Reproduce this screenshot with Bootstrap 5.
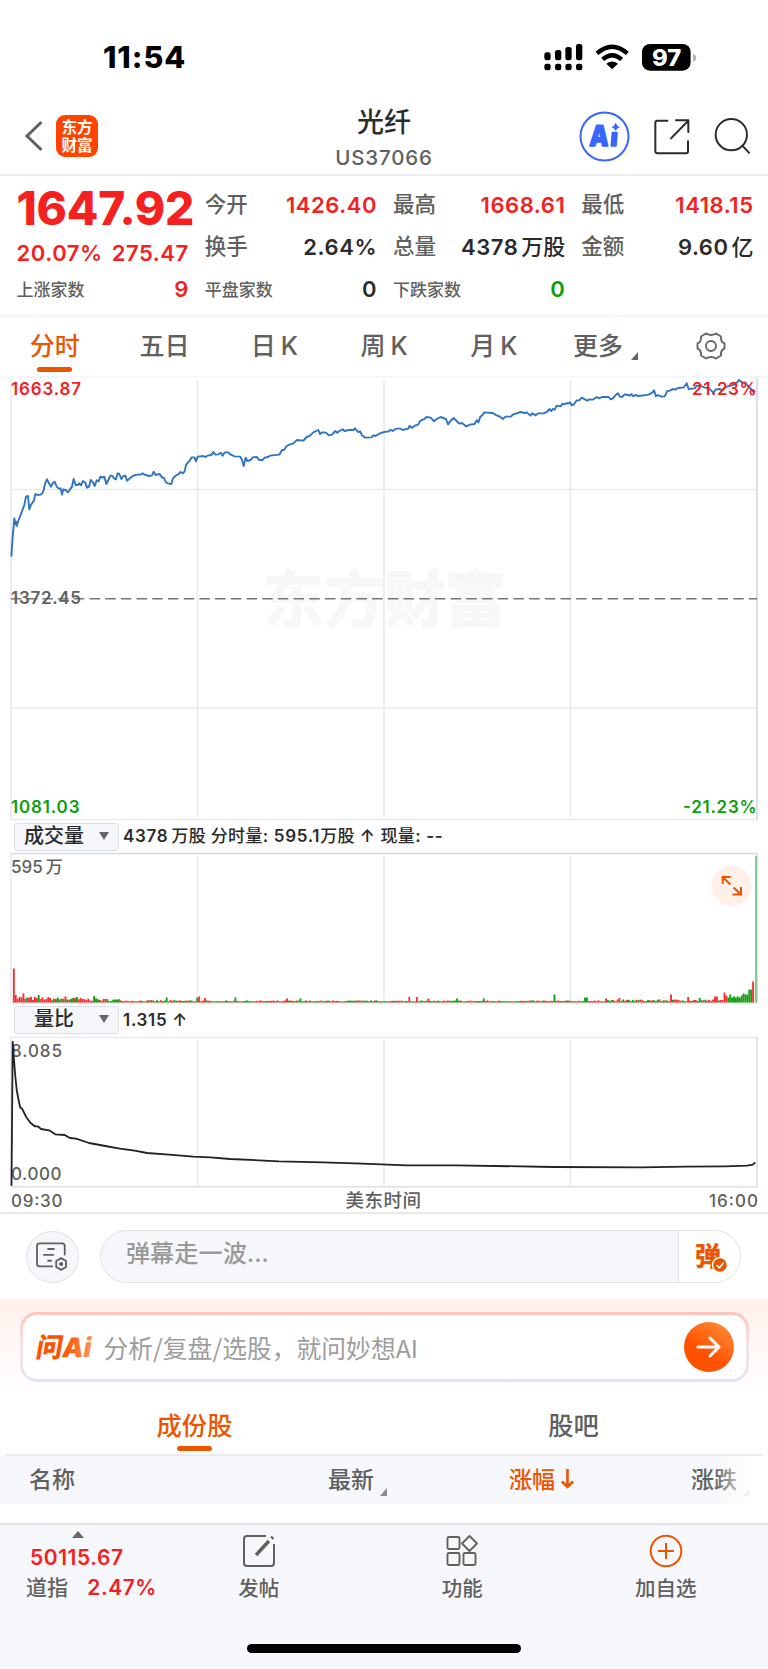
<!DOCTYPE html>
<html lang="zh-CN">
<head>
<meta charset="utf-8">
<meta name="viewport" content="width=device-width, initial-scale=1">
<title>光纤 US37066</title>
<link href="https://cdn.jsdelivr.net/npm/bootstrap@5.3.0/dist/css/bootstrap.min.css" rel="stylesheet">
<style>
  :root { --up:#f52020; --down:#0a9f0a; --brand:#eb5500; --ink:#2b2b2b; --dim:#606060; --pane:#f6f7fa; --rule:#e4e6eb; }
  body { font-family: Inter, "Noto Sans CJK SC", sans-serif; font-weight:500; color:var(--ink); background:#fff; line-height:1; overflow-x:hidden; }
  .phone { width:768px; height:1669px; overflow:hidden; }
  .up { color:var(--up); } .down { color:var(--down); } .dim { color:var(--dim); } .brand { color:var(--brand); }
  svg { flex:none; overflow:visible; }
  .statusbar { height:98px; padding:16px 71px 0 103px; }
  .clock { font-size:30.5px; font-weight:800; letter-spacing:.9px; color:#000; }
  .topbar { height:78px; border-bottom:2px solid #ededed; padding:0 17px 0 25px; }
  .topbar .side { width:172px; }
  .topbar .side-r { width:180px; padding-left:8px; }
  .applogo { width:42px; height:42px; border-radius:9px; background:#ff4400; color:#fff; font-weight:700; font-size:15.6px; line-height:18px; margin-left:13px; padding-top:1px; }
  .stock-name { font-size:27px; line-height:30px; margin-top:5px; }
  .stock-code { font-size:20.5px; line-height:22px; letter-spacing:.85px; margin-top:9px; font-weight:500; }
  .quote { height:141px; border-bottom:2px solid #f5f5f5; padding:8px 15px 0 16.5px; }
  .quote .row { --bs-gutter-x:16.5px; }
  .q { height:42px; font-size:21.5px; }
  .q .num { letter-spacing:.55px; font-size:22px; font-weight:600; margin-right:-.55px; }
  .q .num span { margin-left:3px; font-weight:500; letter-spacing:0; }
  .price { height:48px; font-size:46px; font-weight:800; letter-spacing:-.2px; }
  .q.sm-q span:first-child { font-size:17px; padding-top:3px; }
  .periods { height:61px; border-bottom:2px solid #f5f6f8; position:relative; }
  .periods .tab { font-size:25px; color:var(--dim); width:110px; height:58px; position:relative; }
  .periods .tab span.k { margin-left:5px; }
  .tab.on { color:var(--brand); }
  .tab.on::after { content:""; position:absolute; left:50%; bottom:3px; width:35px; height:5px; margin-left:-17.5px; border-radius:3px; background:var(--brand); }
  .corner { width:0; height:0; border-left:7px solid transparent; border-bottom:8px solid #666; }
  .ind { height:31px; padding-left:14px; font-size:17px; }
  .ind .pick { width:105px; height:28px; border:1px solid #dcdfe5; border-radius:3px; background:var(--pane); font-size:20px; padding:0 9px 2px 9px; color:var(--ink); }
  .ind .val { margin-left:4px; letter-spacing:.7px; white-space:pre; font-weight:600; }
  .ind .val b { font-weight:500; letter-spacing:.3px; }
  .caret { border:5px solid transparent; border-top:8px solid #666; border-bottom:0; }
  .danmu { height:87px; padding:0 27px 0 26px; border-top:2px solid #e9e9ee; }
  .round { width:53px; height:52px; border:1px solid #dfe2e8; border-radius:50%; background:var(--pane); }
  .pill { width:642px; height:53px; border:1.5px solid #dfe1e7; border-radius:27px; background:var(--pane); margin-left:21px; overflow:hidden; }
  .pill .ph { font-size:24.2px; color:#999; padding:0 0 5px 25px; font-weight:500; }
  .pill .go { width:62px; background:#fff; border-left:1.5px solid #dfe1e7; padding-left:3px; }
  .askzone { height:98px; background:linear-gradient(#fff0ec,#fff); padding:13px 19.5px 0; }
  .ask { height:70px; border:3px solid transparent; border-radius:17px; background:linear-gradient(#fff,#fff) padding-box, linear-gradient(#ffc3bb,#f4e2ea 50%,#dfe6f8) border-box; padding:0 12px 0 11px; }
  .ask .ph { font-size:24.8px; color:#9d9d9d; font-weight:400; margin-left:13px; font-family:"Noto Sans CJK SC",sans-serif; }
  .send { width:50px; height:50px; border-radius:50%; background:linear-gradient(215deg,#ff9440,#ff5200 60%); }
  .subtabs { height:59px; margin:0 5px; border-bottom:2px solid #ececee; }
  .subtabs .tab { font-size:25.3px; color:var(--dim); position:relative; height:57px; padding-bottom:0; width:379px; }
  .subtabs .tab.on { color:var(--brand); }
  .subtabs .tab.on::after { bottom:3px; }
  .thead-x { height:48px; background:var(--pane); font-size:23px; position:relative; padding-left:29px; color:var(--dim); }
  .thead-x > span { display:block; }
  .fade-r { position:absolute; right:0; top:0; width:54px; height:100%; background:linear-gradient(90deg,rgba(255,255,255,0),#fff 75%); }
  .bottombar { margin-top:19px; height:146px; background:var(--pane); border-top:2px solid #e3e4e8; }
  .act { width:203.5px; font-size:20.5px; color:var(--dim); }
  .index-num { font-weight:600; letter-spacing:.55px; }
  .homebar { width:274px; height:9px; border-radius:5px; background:#000; }
</style>
</head>
<body>
<main class="phone d-flex flex-column">
  <div class="statusbar d-flex justify-content-between align-items-center flex-shrink-0">
    <span class="clock">11:54</span>
    <svg width="153.3" height="28" viewBox="44 36 460 84">
      <g fill="#000">
        <rect x="45" y="64" width="19" height="24" rx="7"/><rect x="77" y="57" width="19" height="31" rx="7"/><rect x="108" y="48" width="19" height="40" rx="7"/><rect x="140" y="39" width="19" height="49" rx="7"/>
        <rect x="45" y="98" width="19" height="20" rx="7"/><rect x="77" y="98" width="19" height="20" rx="7"/><rect x="108" y="98" width="19" height="20" rx="7"/><rect x="140" y="98" width="19" height="20" rx="7"/>
        <rect x="338" y="39" width="146" height="80" rx="24"/>
        <path d="M248.500 115 231 98q17.500-13 35 0z"/>
      </g>
      <path d="M203 67q45.500-40 91 0M220 85q28.500-25 57 0" fill="none" stroke="#000" stroke-width="13"/>
      <path d="M491 68q10 3 10 12t-10 12z" fill="#b5b5b5"/>
      <text x="368" y="104" font-size="68" font-weight="800" fill="#fff" textLength="88" lengthAdjust="spacingAndGlyphs">97</text>
    </svg>
  </div>

  <header class="topbar d-flex align-items-center justify-content-between flex-shrink-0">
    <div class="side d-flex align-items-center">
      <svg width="18" height="30" viewBox="0 0 18 30" fill="none" stroke="#606060" stroke-width="3"><path d="M16.500 1 2 15l14.500 14"/></svg>
      <div class="applogo d-flex flex-column align-items-center justify-content-center"><span>东方</span><span>财富</span></div>
    </div>
    <div class="text-center">
      <div class="stock-name">光纤</div>
      <div class="stock-code dim">US37066</div>
    </div>
    <div class="side side-r d-flex align-items-center">
      <svg width="50.700" height="50.700" viewBox="150 244 152 152">
        <circle cx="226.500" cy="320.500" r="72" fill="#fff" stroke="#3866ff" stroke-width="6"/>
        <text transform="translate(180 348) skewX(-3)" font-size="86" font-weight="900" fill="#3866ff" stroke="#3866ff" stroke-width="4" stroke-linejoin="round" textLength="58" lengthAdjust="spacingAndGlyphs">A</text>
        <path d="M251 310h12l-3 38h-12z" fill="#3866ff" stroke="#3866ff" stroke-width="7" stroke-linejoin="round"/>
        <path d="M260 279q3 10 13 13-10 3-13 12-3-9-13-12 10-3 13-13z" fill="#3866ff"/>
      </svg>
      <svg width="36" height="36.700" viewBox="372 264 108 110" style="margin-left:24px" fill="none" stroke="#2b2b2b" stroke-width="6" stroke-linecap="round" stroke-linejoin="round"><path d="M412 272H382q-6 0-6 6v86q0 6 6 6h86q6 0 6-6V334M438 271h37v35M474 273l-51 52"/></svg>
      <svg width="37.300" height="38" viewBox="552 262 112 114" style="margin-left:24px" fill="none" stroke="#2b2b2b" stroke-width="6"><circle cx="604" cy="315" r="47"/><path d="m637 348 22 23"/></svg>
    </div>
  </header>

  <section class="quote flex-shrink-0">
    <div class="row row-cols-4">
      <div class="col">
        <div class="price up d-flex align-items-center">1647.92</div>
        <div class="q up d-flex justify-content-between align-items-center" style="height:41px"><span class="num">20.07%</span><span class="num">275.47</span></div>
        <div class="q sm-q d-flex justify-content-between align-items-center" style="height:32px"><span class="dim">上涨家数</span><span class="num up">9</span></div>
      </div>
      <div class="col">
        <div class="q d-flex justify-content-between align-items-center"><span class="dim">今开</span><span class="num up">1426.40</span></div>
        <div class="q d-flex justify-content-between align-items-center"><span class="dim">换手</span><span class="num">2.64%</span></div>
        <div class="q sm-q d-flex justify-content-between align-items-center"><span class="dim">平盘家数</span><span class="num">0</span></div>
      </div>
      <div class="col">
        <div class="q d-flex justify-content-between align-items-center"><span class="dim">最高</span><span class="num up">1668.61</span></div>
        <div class="q d-flex justify-content-between align-items-center"><span class="dim">总量</span><span class="num">4378<span>万股</span></span></div>
        <div class="q sm-q d-flex justify-content-between align-items-center"><span class="dim">下跌家数</span><span class="num down">0</span></div>
      </div>
      <div class="col">
        <div class="q d-flex justify-content-between align-items-center"><span class="dim">最低</span><span class="num up">1418.15</span></div>
        <div class="q d-flex justify-content-between align-items-center"><span class="dim">金额</span><span class="num">9.60<span>亿</span></span></div>
      </div>
    </div>
  </section>

  <nav class="periods d-flex flex-shrink-0">
    <div class="tab on d-flex align-items-center justify-content-center">分时</div>
    <div class="tab d-flex align-items-center justify-content-center">五日</div>
    <div class="tab d-flex align-items-center justify-content-center">日<span class="k">K</span></div>
    <div class="tab d-flex align-items-center justify-content-center">周<span class="k">K</span></div>
    <div class="tab d-flex align-items-center justify-content-center">月<span class="k">K</span></div>
    <div class="tab d-flex align-items-center justify-content-center ps-1">更多<span class="corner align-self-end ms-2" style="margin-bottom:15px"></span></div>
    <div class="tab d-flex align-items-center justify-content-center">
      <svg width="30" height="30" viewBox="0 0 30 30" fill="none" stroke="#666" stroke-width="1.900" stroke-linejoin="round" style="margin-right:4px"><path d="M10 2.500Q15 5.500 20 2.500l5 3Q24.500 11 28.500 12.500v5Q24.500 19 25 24.500l-5 3Q15 24.500 10 27.500l-5-3Q5.500 19 1.500 17.500v-5Q5.500 11 5 5.500z"/><circle cx="15" cy="15" r="5"/></svg>
    </div>
  </nav>

  <svg class="d-block" width="768" height="443" viewBox="0 378 768 443">
    <g fill="none" stroke="#e6e9ef" stroke-width="1.500">
      <path d="M11 378V819.500H757V378M197.500 380V817M384 380V817M570.500 380V817M11 489.500H757M11 708H757"/>
    </g>
    <path d="M757 378V820" stroke="#d7dae2" stroke-width="1.500"/>
    <text x="263" y="622" font-size="61" font-weight="700" fill="#f7f7f7" stroke="#f7f7f7" stroke-width="1.500" textLength="243" style="font-family:'Noto Sans CJK SC',sans-serif">东方财富</text>
    <path d="M11 598.700H757" stroke="#777" stroke-width="1.500" stroke-dasharray="10.500 5.200"/>
    <g fill="none" stroke="#2f74c0" stroke-width="5.700" stroke-linejoin="round">
      <polyline transform="translate(0 370) scale(.33333)" points="34,560 38,500 43,445 46,462 48,455 50,468 55,452 62,435 68,418 73,405 78,380 84,378 88,418 93,405 98,397 102,392 106,372 112,375 122,374 128,368 131,360 135,342 141,328 147,340 153,350 158,340 164,335 170,350 176,356 182,355 186,374 190,358 197,360 204,367 210,358 216,350 221,327 227,345 233,345 238,340 243,346 249,333 256,338 261,353 267,350 272,330 279,337 284,348 290,331 296,334 301,320 307,323 313,320 319,342 325,330 331,317 337,318 342,325 348,328 353,310 358,312 364,327 370,318 376,317 381,332 388,326 398,318 410,314 422,314 428,310 434,314 446,318 456,316 461,305 467,315 473,313 479,312 486,322 492,324 497,336 503,340 514,342 519,325 526,318 536,312 542,306 548,310 554,304 558,285 564,277 570,271 575,262 583,262 588,274 593,260 610,258 616,261 622,257 634,255 640,246 646,254 656,253 662,248 668,257 674,247 684,247 692,254 704,259 721,260 726,270 731,288 737,263 742,273 752,270 758,262 771,261 777,270 788,270 794,263 804,261 810,257 838,254 846,240 852,240 860,228 870,223 880,220 891,210 910,212 920,201 930,197 940,187 955,180 960,192 966,187 978,188 986,196 996,194 1006,183 1012,188 1018,183 1028,178 1034,183 1046,180 1060,180 1065,175 1074,186 1080,184 1086,196 1096,203 1114,202 1120,196 1126,198 1140,190 1152,186"/>
      <polyline transform="translate(368 370) scale(.33333)" points="48,186 62,184 68,179 74,183 84,176 98,176 104,180 121,176 125,167 131,174 140,167 150,164 158,151 168,148 176,141 188,143 198,154 206,147 218,141 234,147 240,163 248,152 257,144 266,153 274,161 282,159 294,169 306,164 320,162 326,151 331,157 337,140 344,135 349,127 374,129 386,136 396,140 405,147 412,140 428,140 436,133 458,126 470,129 476,127 487,137 493,130 503,136 511,130 528,130 538,125 544,117 550,123 554,117 560,119 566,107 578,109 584,101 590,103 596,99 600,101 606,97 611,106 618,103 626,91 634,91 641,83 658,92 664,88 674,89 686,81 694,85 702,81 722,81 728,88 734,86 742,76 750,70 756,80 762,81 770,73 780,75 786,77 790,72 796,79 802,75 812,78 842,74 853,68 858,61 864,79 870,75 880,80 890,79 898,63 906,62 914,57 922,59 930,54 948,52 956,40 962,57 980,55 986,47 1000,48 1010,53 1022,54 1036,68 1044,58 1056,57 1062,61 1076,50 1088,47 1098,44 1108,37 1113,30 1124,38 1132,37 1140,48 1148,56 1156,66 1162,62"/>
    </g>
    <g font-size="17" font-weight="600">
      <text x="11" y="395" fill="#f52020" textLength="70">1663.87</text>
      <text x="692" y="395" fill="#f52020" textLength="64.500">21.23%</text>
      <text x="11" y="603.500" fill="#606060" textLength="70">1372.45</text>
      <text x="11" y="812.500" fill="#0a9f0a" textLength="68.500">1081.03</text>
      <text x="683" y="812.500" fill="#0a9f0a" textLength="73.500">-21.23%</text>
    </g>
  </svg>

  <div class="ind d-flex align-items-center flex-shrink-0">
    <div class="pick d-flex align-items-center justify-content-between"><span>成交量</span><span class="caret"></span></div>
    <div class="val">4378<b style="margin-left:3px">万股 分时量</b>: 595.1<b>万股</b> ↑ <b>现量</b>: --</div>
  </div>

  <svg class="d-block" width="768" height="152" viewBox="0 852 768 152">
    <path d="M11 853.500V1003H757V853.500M197.500 856V1002M384 856V1002M570.500 856V1002" fill="none" stroke="#e6e9ef" stroke-width="1.500"/>
    <path d="M11 853.500H757V1003" fill="none" stroke="#d7dae2" stroke-width="1.500"/>
    <g id="volume"></g>
    <text x="11" y="872.500" font-size="17" fill="#606060">595<tspan dx="3">万</tspan></text>
    <circle cx="731.700" cy="886" r="20" fill="#fff1ea"/>
    <path d="M722.700 884v-7h8M723 877.500l7.500 7M741 887v7.500h-8.500M741 894.500l-7.500-7" fill="none" stroke="#eb5500" stroke-width="2"/>
  </svg>

  <div class="ind d-flex align-items-center flex-shrink-0" style="height:32px">
    <div class="pick d-flex align-items-center justify-content-between" style="padding-left:19px"><span>量比</span><span class="caret"></span></div>
    <div class="val">1.315 ↑</div>
  </div>

  <svg class="d-block" width="768" height="176" viewBox="0 1036 768 176">
    <path d="M11 1186V1037.500H757V1186M197.500 1040V1186M384 1040V1186M570.500 1040V1186" fill="none" stroke="#e6e9ef" stroke-width="1.500"/>
    <path d="M757 1037V1186.700H11" fill="none" stroke="#dfe0e4" stroke-width="1.500"/>
    <g font-size="17" fill="#606060">
      <text x="11" y="1056.500" textLength="51">8.085</text>
      <text x="11" y="1180" textLength="50.500">0.000</text>
      <text x="11" y="1206.500" textLength="51.500">09:30</text>
      <text x="345.500" y="1207" font-size="18.500" textLength="75.500">美东时间</text>
      <text x="709" y="1206.500" textLength="49">16:00</text>
    </g>
    <polyline fill="none" stroke="#222" stroke-width="1.800" stroke-linejoin="round" points="11.500,1185.700 12.700,1041.700 13.700,1056.700 15.200,1075 16.700,1090 18.600,1100 20.100,1107.300 22.500,1109.300 26,1116.700 30.400,1122.700 34.800,1126.300 37.700,1126.300 41.100,1129 49,1130.300 55.300,1134.300 64.700,1135 70,1138 76,1138.700 89.100,1143 105.300,1146 120,1148.700 134.700,1150.700 147,1153 169,1154.700 193.500,1156.700 210.600,1157.300 230,1159 279,1161.300 323,1162.300 362.500,1163.700 406.500,1165.300 455.500,1165.300 553.500,1167 641.600,1167.300 685.700,1166.700 724.900,1166.300 747,1165.700 752.800,1164.700 755.300,1162.300"/>
  </svg>

  <div class="danmu d-flex align-items-center flex-shrink-0">
    <div class="round d-flex align-items-center justify-content-center">
      <svg width="32" height="29" viewBox="112 52 98 88" fill="none" stroke="#606060" stroke-width="5.500" stroke-linecap="round"><path d="M162 126H123q-8 0-8-8V64q0-8 8-8h69q8 0 8 8v26M149 73h18M136 91h29M149 109h9"/><path d="m189 101 15 9v18l-15 9-15-9v-18z"/><circle cx="189" cy="119" r="3.500" fill="#606060"/></svg>
    </div>
    <div class="pill d-flex">
      <div class="ph flex-grow-1 d-flex align-items-center">弹幕走一波...</div>
      <div class="go d-flex align-items-center justify-content-center">
        <svg width="31" height="30" viewBox="0 0 31 30"><text x="-1" y="24" font-size="26" font-weight="700" fill="#eb5500" stroke="#eb5500" stroke-width=".5" style="font-family:'Noto Sans CJK SC',sans-serif">弹</text><circle cx="24" cy="23" r="7.500" fill="#eb5500" stroke="#fff" stroke-width="1.500"/><path d="m20.500 23 3 2.800 4-5" fill="none" stroke="#fff" stroke-width="1.700"/></svg>
      </div>
    </div>
  </div>

  <div class="askzone flex-shrink-0">
    <div class="ask d-flex align-items-center">
      <svg width="57" height="30" viewBox="0 0 57 30">
        <defs><linearGradient id="hot"><stop offset=".5" stop-color="#ff5200"/><stop offset="1" stop-color="#ff9050"/></linearGradient></defs>
        <text transform="translate(1 25) skewX(-10)" font-size="27" font-weight="900" fill="url(#hot)" textLength="55" lengthAdjust="spacingAndGlyphs">问Ai</text>
      </svg>
      <span class="ph">分析/复盘/选股，就问妙想AI</span>
      <span class="send ms-auto d-flex align-items-center justify-content-center">
        <svg width="25" height="22" viewBox="0 0 25 22" fill="none" stroke="#fff" stroke-width="3" stroke-linecap="round" stroke-linejoin="round"><path d="M2 11h21M14 2l9 9-9 9"/></svg>
      </span>
    </div>
  </div>

  <div class="subtabs d-flex flex-shrink-0">
    <div class="tab on d-flex align-items-center justify-content-center">成份股</div>
    <div class="tab d-flex align-items-center justify-content-center">股吧</div>
  </div>
  <div class="thead-x d-flex align-items-center flex-shrink-0">
    <span style="width:299px">名称</span>
    <span class="d-flex" style="width:181px">最新<i class="corner align-self-end" style="margin:0 0 -4px 6px;opacity:.75"></i></span>
    <span class="brand d-flex" style="width:182px">涨幅
      <svg width="13" height="20" viewBox="0 0 13 20" style="margin:0 0 0 6px" fill="none" stroke="#eb5500" stroke-width="2.600"><path d="M6.500 0v18M1 12.500l5.500 5.500 5.500-5.500"/></svg>
    </span>
    <span class="d-flex">涨跌<i class="corner align-self-end" style="margin:0 0 -4px 6px;opacity:.5"></i></span>
    <div class="fade-r"></div>
  </div>

  <footer class="bottombar d-flex flex-column align-items-center flex-shrink-0">
    <div class="d-flex w-100" style="height:119px">
      <div style="width:157px;padding:6px 0 0 26px;font-size:21px">
        <svg class="d-block" width="12" height="7" viewBox="0 0 12 7" style="margin-left:46px"><path d="M0 7 6 0l6 7z" fill="#666"/></svg>
        <div class="up index-num" style="margin:8px 0 0 4px;line-height:24px">50115.67</div>
        <div class="d-flex align-items-center" style="margin-top:6px;line-height:24px"><span class="dim" style="width:62px">道指</span><span class="up index-num">2.47%</span></div>
      </div>
      <div class="act d-flex flex-column align-items-center">
        <svg width="34" height="34" viewBox="0 0 34 34" style="margin-top:9px" fill="none" stroke="#606060" stroke-width="2"><path d="M24 2H5Q2 2 2 5v24q0 3 3 3h24q3 0 3-3V10"/><path d="M14 21 27 7M29.500 4.500 31 3" stroke-width="3.400"/></svg>
        <span style="margin-top:11px">发帖</span>
      </div>
      <div class="act d-flex flex-column align-items-center">
        <svg width="34" height="34" viewBox="0 0 34 34" style="margin-top:9px" fill="none" stroke="#606060" stroke-width="1.900" stroke-linejoin="round"><rect x="2.500" y="3" width="12" height="12" rx="1.500"/><rect x="2.500" y="19" width="12" height="12" rx="1.500"/><rect x="18.500" y="19" width="12" height="12" rx="1.500"/><path d="m24.500 2 7.500 7.500-7.500 7.500L17 9.500z"/></svg>
        <span style="margin-top:11px">功能</span>
      </div>
      <div class="act d-flex flex-column align-items-center brand">
        <svg width="34" height="34" viewBox="0 0 34 34" style="margin-top:9px" fill="none" stroke="#eb5500" stroke-width="2"><circle cx="17" cy="17" r="15.300"/><path d="M17 9v16M9 17h16"/></svg>
        <span style="margin-top:11px">加自选</span>
      </div>
    </div>
    <div class="homebar"></div>
  </footer>
</main>
<script src="https://cdn.jsdelivr.net/npm/bootstrap@5.3.0/dist/js/bootstrap.bundle.min.js"></script>
<script>
  // One bar per minute of the session: 390 bars across 746px, baseline at y=1002.5.
  const N = 390, X0 = 11, STEP = 745 / N, BASE = 1002.5;
  const RED = '#f53030', GREEN = '#12a012';
  // Minutes that stand out: [minute, height, colour]
  const peaks = { 1:[34,RED], 2:[7.5,RED], 6:[9,RED], 14:[7.5,GREEN], 28:[6,RED], 34:[5.500,GREEN], 43:[6.500,GREEN], 81:[5,GREEN],
    97:[5,GREEN], 98:[6,RED], 101:[4.500,RED], 117:[5,GREEN], 144:[4,RED], 151:[4,GREEN], 208:[5.500,RED], 212:[5.500,RED], 218:[4,RED],
    233:[4,GREEN], 247:[4,GREEN], 311:[4,RED], 284:[8,GREEN], 300:[5,GREEN], 301:[5,GREEN], 318:[4.500,RED], 360:[4.500,GREEN],
    345:[8,RED], 354:[5.500,RED], 368:[6,RED], 369:[6,RED], 373:[10,RED], 374:[7,RED], 376:[8,GREEN], 378:[6,GREEN], 380:[6,GREEN],
    382:[7,GREEN], 383:[9,GREEN], 384:[8,GREEN], 385:[8,GREEN], 386:[13,GREEN], 387:[13,GREEN], 388:[21,RED] };
  let seed = 7;
  const rnd = () => (seed = (seed * 16807) % 2147483647) / 2147483647;
  let out = '';
  for (let i = 0; i < N - 1; i++) {
    const level = i < 60 ? 3 + 3 * (1 - i / 60) : i < 100 ? 2.200 : i > 310 ? 2.800 : 1.900;
    let h = Math.max(1.2, level * (0.4 + 0.7 * rnd()));
    let c = rnd() > (i < 20 || (i > 35 && i < 48) ? 0.25 : 0.5) ? RED : GREEN;
    if (i > 374) { c = GREEN; h = 5; }
    if (i < 1) h = 0;
    if (peaks[i]) [h, c] = peaks[i];
    out += `<rect x="${(X0 + i * STEP).toFixed(2)}" y="${(BASE - h).toFixed(2)}" width="1.9" height="${h.toFixed(2)}" fill="${c}"/>`;
  }
  out += `<rect x="755.300" y="856" width="1.300" height="146.500" fill="#4fb95a"/>`;
  document.getElementById('volume').innerHTML = out;
</script>
</body>
</html>
